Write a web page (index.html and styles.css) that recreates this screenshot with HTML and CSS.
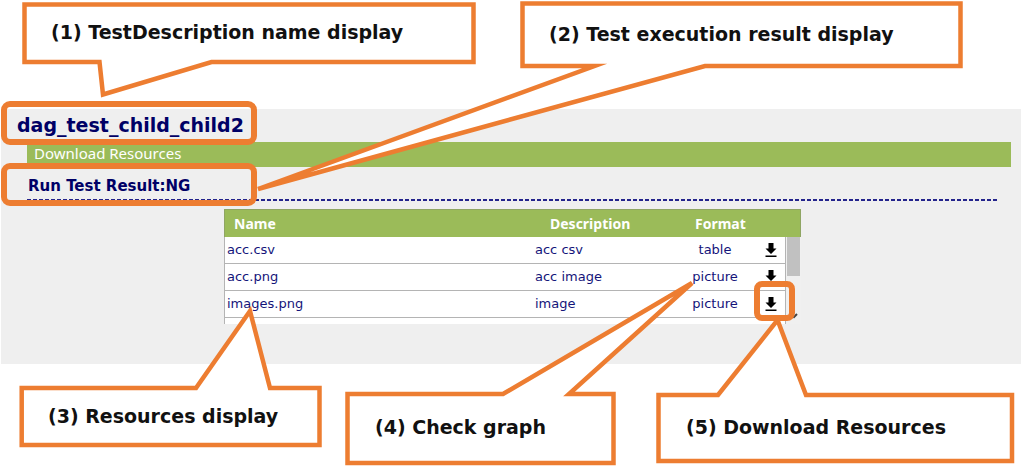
FILE: index.html
```html
<!DOCTYPE html>
<html lang="en">
<head>
<meta charset="utf-8">
<title>Download Resources</title>
<link rel="stylesheet" href="styles.css">
</head>
<body>
<svg class="symbols" aria-hidden="true">
  <symbol id="download" viewBox="0 0 12 15">
    <path d="M3.500 0h5v5.500H11.500L6 11 .5 5.500h3zM.5 12.500h11V14H.5z"/>
  </symbol>
</svg>
<div class="canvas">
  <main class="panel">
    <h1 class="title">dag_test_child_child2</h1>
    <h2 class="bar">Download Resources</h2>
    <h3 class="result">Run Test Result:NG</h3>
    <div class="resources">
      <table class="table">
        <colgroup><col class="col-name"><col class="col-desc"><col class="col-format"><col class="col-get"><col class="col-scroll"></colgroup>
        <thead>
          <tr><th>Name</th><th>Description</th><th colspan="2">Format</th><th></th></tr>
        </thead>
        <tbody>
          <tr><td>acc.csv</td><td>acc csv</td><td class="center">table</td><td class="get"><button class="download" aria-label="Download acc.csv"><svg class="icon"><use href="#download"/></svg></button></td>
            <td class="scroll" rowspan="4"><div class="track"><div class="thumb"></div><svg class="arrow" viewBox="0 0 8 6"><path d="M1 1l3 3 3-3" fill="none" stroke="#444" stroke-width="2"/></svg></div></td></tr>
          <tr><td>acc.png</td><td>acc image</td><td class="center">picture</td><td class="get"><button class="download" aria-label="Download acc.png"><svg class="icon"><use href="#download"/></svg></button></td></tr>
          <tr><td>images.png</td><td>image</td><td class="center">picture</td><td class="get"><button class="download" aria-label="Download images.png"><svg class="icon"><use href="#download"/></svg></button></td></tr>
          <tr><td></td><td></td><td></td><td class="get"><button class="download" aria-label="Download"><svg class="icon"><use href="#download"/></svg></button></td></tr>
        </tbody>
      </table>
    </div>
  </main>
  <svg class="shapes" width="1021" height="468" aria-hidden="true">
    <g class="callouts">
      <path d="M24.500 4.500H473.500V62H211.500L103 94.500 99.500 62H24.500z"/>
      <path d="M522.500 3.500H960.500V66H705L258 189 594.500 66H522.500z"/>
      <path d="M21.700 388H196L250 311 270 388H319.500V445H21.700z"/>
      <path d="M347.500 394H503L692 283 569 394H613.500V463H347.500z"/>
      <path d="M658.500 395H718L777.500 320 806 395H1012V461H658.500z"/>
    </g>
    <g class="rings">
      <rect x="4" y="104" width="250" height="38" rx="6"/>
      <rect x="4" y="166" width="250" height="37" rx="6"/>
      <rect x="757" y="284" width="35" height="34" rx="5"/>
    </g>
  </svg>
  <p class="label label-1">(1) TestDescription name display</p>
  <p class="label label-2">(2) Test execution result display</p>
  <p class="label label-3">(3) Resources display</p>
  <p class="label label-4">(4) Check graph</p>
  <p class="label label-5">(5) Download Resources</p>
</div>
</body>
</html>
```
FILE: styles.css
```css
* { box-sizing: border-box; }
body { margin: 0; background: #fff; font-family: "DejaVu Sans", "Noto Sans", sans-serif; color: #000066; }
h1, h2, h3, p { margin: 0; }
.symbols { position: absolute; width: 0; height: 0; }
.canvas { position: relative; padding: 109px 0 104px 1px; }

.panel { background: #efefef; padding: 0 23px 40px 26px; }
.title { margin-left: -10px; font-size: 19px; line-height: 33px; font-weight: 700; }
.bar { margin-right: -13px; background: #9bbb59; color: #fff; padding-left: 7px; font-family: "Noto Sans", sans-serif; font-size: 15px; line-height: 23px; height: 25px; font-weight: 400; }
.result {
  padding: 5px 0 0 1px; font-size: 15px; line-height: 29px; font-weight: 700;
  background: repeating-linear-gradient(90deg, #24248c 0 4px, transparent 4px 6px) bottom / 100% 2px no-repeat;
}
.resources { width: 577px; max-width: 100%; height: 115px; margin: 8px auto 0; overflow: hidden; background: #fff; }

.table { width: 100%; table-layout: fixed; border-collapse: separate; border-spacing: 0; font-size: 13px; line-height: 20px; }
.col-desc { width: 145px; }
.col-format { width: 74px; }
.col-get { width: 34px; }
.col-scroll { width: 15px; }
th { height: 28px; padding: 0 0 0 17px; background: #9bbb59; color: #fff; font-family: "Noto Sans", sans-serif; font-size: 14px; text-align: left; font-weight: 700; border-top: 1px solid #8fa563; }
th:first-child { padding-left: 9px; border-left: 1px solid #8fa563; }
th:last-child { padding: 0; border-right: 1px solid #8fa563; }
td { height: 27px; padding: 0 2px; border-bottom: 1px solid #b4b4b4; color: #14147a; }
td:first-child { border-left: 1px solid #b4b4b4; }
.center { text-align: center; padding: 0; }
td.get { padding: 0; border-right: 1px solid #b4b4b4; }
.download { display: block; width: 12px; height: 15px; margin: 0 0 0 13px; padding: 0; border: 0; background: none; color: #000; }
.icon { display: block; width: 12px; height: 15px; }
td.scroll { padding: 0 1px; border: 0; background: #f0f0f0; vertical-align: top; }
.track { height: 87px; display: flex; flex-direction: column; align-items: center; justify-content: space-between; padding-bottom: 5px; }
.thumb { width: 100%; height: 39px; background: #c1c1c1; }
.arrow { width: 8px; height: 6px; }

.shapes { position: absolute; left: 0; top: 0; }
.callouts { fill: #fff; stroke: #ed7d31; stroke-width: 4.5; stroke-miterlimit: 8; }
.rings { fill: none; stroke: #ed7d31; stroke-width: 6; }
.label { position: absolute; color: #111; font-size: 19px; line-height: 28px; font-weight: 700; white-space: nowrap; }
.label-1 { left: 51px; top: 18px; }
.label-2 { left: 549px; top: 20px; }
.label-3 { left: 48px; top: 402px; }
.label-4 { left: 375px; top: 413px; }
.label-5 { left: 686px; top: 413px; }
```
